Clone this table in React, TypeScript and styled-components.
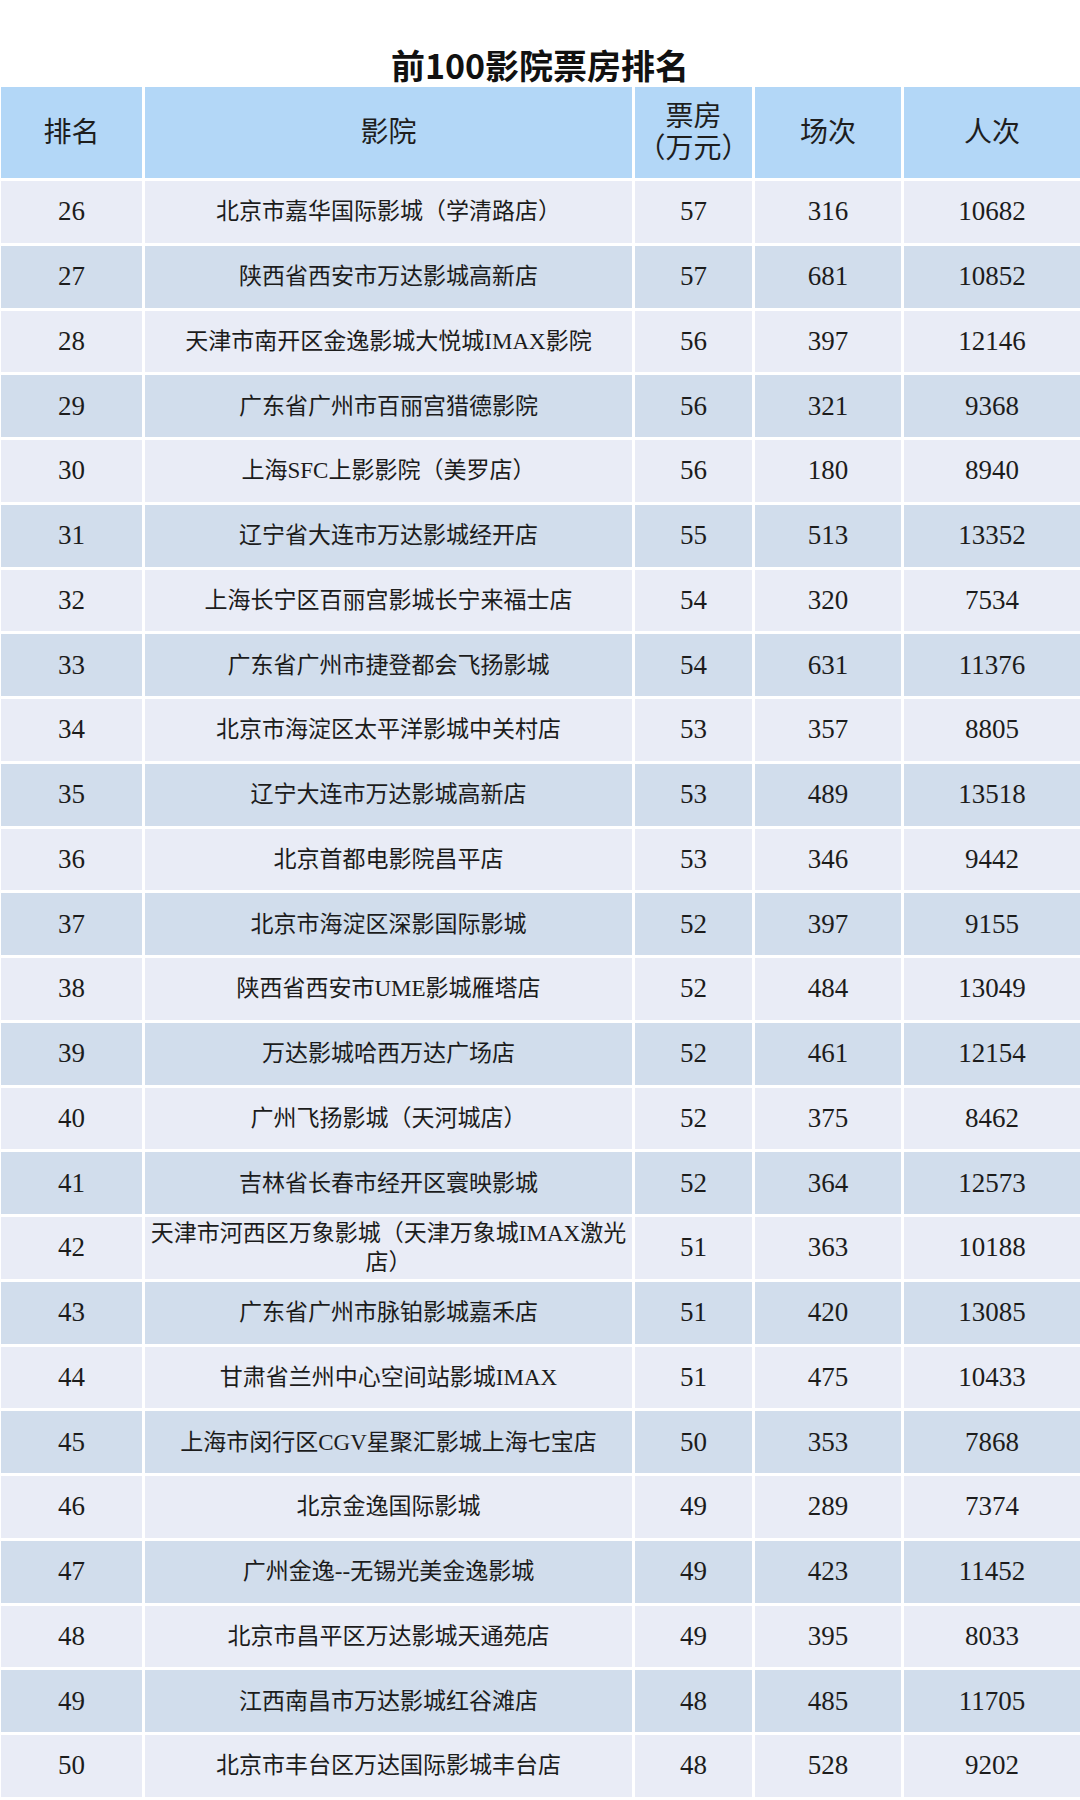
import React from "react";
import styled, { createGlobalStyle } from "styled-components";

const Global = createGlobalStyle`
  html, body { margin: 0; padding: 0; background: #ffffff; }
  body { font-family: "Liberation Serif", "Noto Sans CJK SC", serif; color: #1c1c1c; }
`;

const Page = styled.div`
  width: 1080px;
  background: #ffffff;
`;

const Title = styled.h1`
  margin: 0;
  height: 87px;
  display: flex;
  align-items: flex-end;
  justify-content: center;
  padding-bottom: 0px;
  box-sizing: border-box;
  font-family: "Noto Sans CJK SC", "Noto Sans", sans-serif;
  font-weight: 700;
  font-size: 34px;
  line-height: 44px;
  color: #111111;
`;

const Grid = styled.div`
  display: grid;
  grid-template-columns: 141px 487px 117px 146px 1fr;
  grid-template-rows: 91px;
  grid-auto-rows: 61.75px;
  gap: 3px;
  padding-left: 1px;
  background: #ffffff;
`;

const HeadCell = styled.div`
  background: #b3d7f7;
  display: flex;
  align-items: center;
  justify-content: center;
  text-align: center;
  font-family: "Liberation Serif", "Noto Sans CJK SC", serif;
  font-size: 28px;
  line-height: 32px;
  color: #1e1e1e;
  white-space: pre-line;
`;

const Cell = styled.div<{ $alt: boolean; $num?: boolean }>`
  background: ${(p) => (p.$alt ? "#d1ddec" : "#e9ecf6")};
  display: flex;
  align-items: center;
  justify-content: center;
  text-align: center;
  font-family: "Liberation Serif", "Noto Sans CJK SC", serif;
  font-size: ${(p) => (p.$num ? "27px" : "23px")};
  line-height: 29px;
  color: #1c1c1c;
  white-space: pre-line;
  padding: 0 1px;
`;

type Row = [string, string, string, string, string];

const rows: Row[] = [
  ["26", "北京市嘉华国际影城（学清路店）", "57", "316", "10682"],
  ["27", "陕西省西安市万达影城高新店", "57", "681", "10852"],
  ["28", "天津市南开区金逸影城大悦城IMAX影院", "56", "397", "12146"],
  ["29", "广东省广州市百丽宫猎德影院", "56", "321", "9368"],
  ["30", "上海SFC上影影院（美罗店）", "56", "180", "8940"],
  ["31", "辽宁省大连市万达影城经开店", "55", "513", "13352"],
  ["32", "上海长宁区百丽宫影城长宁来福士店", "54", "320", "7534"],
  ["33", "广东省广州市捷登都会飞扬影城", "54", "631", "11376"],
  ["34", "北京市海淀区太平洋影城中关村店", "53", "357", "8805"],
  ["35", "辽宁大连市万达影城高新店", "53", "489", "13518"],
  ["36", "北京首都电影院昌平店", "53", "346", "9442"],
  ["37", "北京市海淀区深影国际影城", "52", "397", "9155"],
  ["38", "陕西省西安市UME影城雁塔店", "52", "484", "13049"],
  ["39", "万达影城哈西万达广场店", "52", "461", "12154"],
  ["40", "广州飞扬影城（天河城店）", "52", "375", "8462"],
  ["41", "吉林省长春市经开区寰映影城", "52", "364", "12573"],
  ["42", "天津市河西区万象影城（天津万象城IMAX激光\n店）", "51", "363", "10188"],
  ["43", "广东省广州市脉铂影城嘉禾店", "51", "420", "13085"],
  ["44", "甘肃省兰州中心空间站影城IMAX", "51", "475", "10433"],
  ["45", "上海市闵行区CGV星聚汇影城上海七宝店", "50", "353", "7868"],
  ["46", "北京金逸国际影城", "49", "289", "7374"],
  ["47", "广州金逸--无锡光美金逸影城", "49", "423", "11452"],
  ["48", "北京市昌平区万达影城天通苑店", "49", "395", "8033"],
  ["49", "江西南昌市万达影城红谷滩店", "48", "485", "11705"],
  ["50", "北京市丰台区万达国际影城丰台店", "48", "528", "9202"],
];

const headers = ["排名", "影院", "票房\n（万元）", "场次", "人次"];

export default function App() {
  return (
    <Page>
      <Global />
      <Title>前100影院票房排名</Title>
      <Grid>
        {headers.map((h) => (
          <HeadCell key={h}>{h}</HeadCell>
        ))}
        {rows.map((r, i) =>
          r.map((v, j) => (
            <Cell key={`${i}-${j}`} $alt={i % 2 === 1} $num={j !== 1}>
              {v}
            </Cell>
          ))
        )}
      </Grid>
    </Page>
  );
}
